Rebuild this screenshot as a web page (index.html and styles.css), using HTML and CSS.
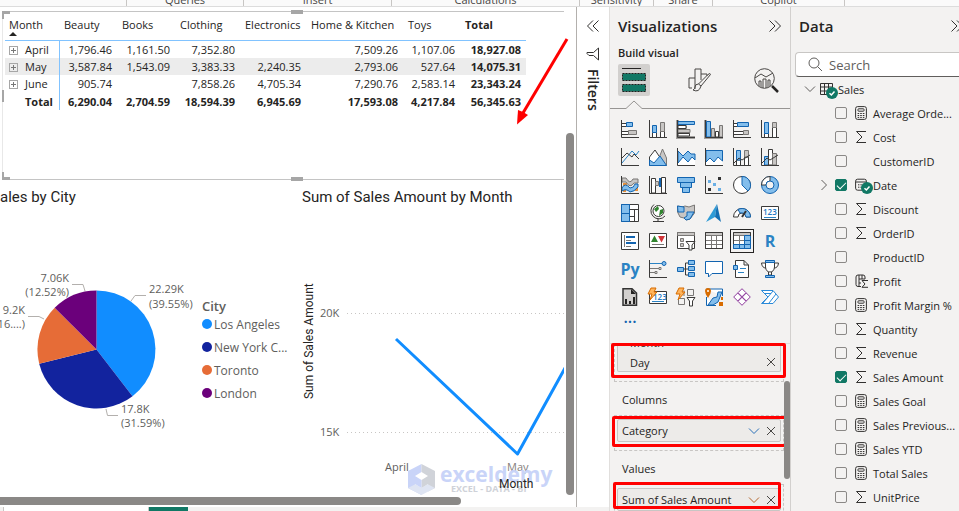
FILE: index.html
```
<!DOCTYPE html>
<html lang="en">
<head>
<meta charset="utf-8">
<title>Sales report</title>
<link rel="stylesheet" href="styles.css">
</head>
<body>
<svg class="defs" aria-hidden="true">
  <symbol id="calc" viewBox="0 0 12 14"><rect x=".6" y=".6" width="10.8" height="12.8" rx="2"/><rect x="3" y="2.8" width="6" height="2.4" rx=".6"/><path d="M2.6 7.5h1.6M5.2 7.5h1.6M7.8 7.5h1.6M2.6 9.5h1.6M5.2 9.5h1.6M7.8 9.5h1.6M2.6 11.4h1.6M5.2 11.4h1.6M7.8 11.4h1.6"/></symbol>
  <symbol id="sum" viewBox="0 0 12 14"><path d="M11 1.5H1.5L7 7L1.5 12.5H11"/></symbol>
  <symbol id="date" viewBox="0 0 12 14"><rect x=".6" y="1.2" width="10.8" height="11" rx="2"/><path d="M.6 4H11.4M3 6.8h1.4M5.4 6.8h1.4M7.8 6.8h1.4M3 9.2h1.4M5.4 9.2h1.4"/></symbol>
  <symbol id="profit" viewBox="0 0 14 14"><path d="M6 12.500H3Q1 12.500 1 10.500V3Q1 1 3 1H8Q10 1 10 3V5M4 1V12M4 5H10M4 9H6M7 1V5M13 6.500H7L10 10L7 13.300H13"/></symbol>
  <symbol id="cross" viewBox="0 0 10 10"><path d="M1 1L9 9M9 1L1 9"/></symbol>
  <symbol id="down" viewBox="0 0 12 8"><path d="M1 1.5L6 6.5L11 1.5"/></symbol>
  <symbol id="dbl" viewBox="0 0 14 14"><path d="M1.5 1.5L7 7L1.5 12.5M7 1.5L12.5 7L7 12.5"/></symbol>
  <symbol id="ok" viewBox="0 0 12 12"><circle cx="6" cy="6" r="6" fill="#117865"/><path d="M3.5 6.2L5.4 8L8.5 4.5" fill="none" stroke="#fff" stroke-width="1.5"/></symbol>
</svg>

<div class="app">
<header class="ribbon">
  <span class="r1"></span><span class="r2">Queries</span><span class="r3">Insert</span><span class="r4">Calculations</span><span class="r5">Sensitivity</span><span class="r6">Share</span><span class="r7">Copilot</span>
</header>

<div class="workspace">
<div class="left">
<div class="stage">
<main class="report">
  <div class="visuals">
    <section class="matrix">
      <i class="handle tl"></i><i class="handle tm"></i><i class="handle ml"></i><i class="handle bl"></i><i class="handle bm"></i>
      <table>
        <colgroup><col class="c-month"><col class="c-58"><col class="c-58"><col class="c-65"><col class="c-66"><col class="c-97"><col class="c-57"><col class="c-66"></colgroup>
        <thead>
          <tr><th>Month<span class="sort"></span></th><th>Beauty</th><th>Books</th><th>Clothing</th><th>Electronics</th><th>Home &amp; Kitchen</th><th>Toys</th><th class="b">Total</th></tr>
        </thead>
        <tbody>
          <tr><th><button class="plus" aria-label="Expand April"></button>April</th><td>1,796.46</td><td>1,161.50</td><td>7,352.80</td><td></td><td>7,509.26</td><td>1,107.06</td><td class="b">18,927.08</td></tr>
          <tr class="alt"><th><button class="plus" aria-label="Expand May"></button>May</th><td>3,587.84</td><td>1,543.09</td><td>3,383.33</td><td>2,240.35</td><td>2,793.06</td><td>527.64</td><td class="b">14,075.31</td></tr>
          <tr><th><button class="plus" aria-label="Expand June"></button>June</th><td>905.74</td><td></td><td>7,858.26</td><td>4,705.34</td><td>7,290.76</td><td>2,583.14</td><td class="b">23,343.24</td></tr>
          <tr class="total"><th>Total</th><td>6,290.04</td><td>2,704.59</td><td>18,594.39</td><td>6,945.69</td><td>17,593.08</td><td>4,217.84</td><td>56,345.63</td></tr>
        </tbody>
      </table>
    </section>

    <section class="pie">
      <h2>ales by City</h2>
      <div class="pie-body">
      <svg width="198" height="283" viewBox="0 212 198 283">
        <path fill="#118dff" d="M96.500 349.500V290.500A59 59 0 0 1 132.500 396.200Z"/>
        <path fill="#12239e" d="M96.500 349.500L132.500 396.200A59 59 0 0 1 39.200 363.700Z"/>
        <path fill="#e66c37" d="M96.500 349.500L39.200 363.700A59 59 0 0 1 54.700 307.800Z"/>
        <path fill="#6b007b" d="M96.500 349.500L54.700 307.800A59 59 0 0 1 96.500 290.500Z"/>
        <path class="leader" d="M131 301L135 295.500H146M72 284.500H83L85 291M28 316.500H39L44 319M106 409L107.500 415.500H118"/>
        <text x="149" y="293">22.29K</text><text x="149" y="308">(39.55%)</text>
        <text class="end" x="69" y="282">7.06K</text><text class="end" x="69" y="296">(12.52%)</text>
        <text class="end" x="25" y="314">9.2K</text><text class="end" x="25" y="328">(16....)</text>
        <text x="121" y="413">17.8K</text><text x="121" y="427">(31.59%)</text>
      </svg>
      <div class="legend">
        <h3>City</h3>
        <ul>
          <li><i class="la"></i>Los Angeles</li>
          <li><i class="ny"></i>New York C...</li>
          <li><i class="to"></i>Toronto</li>
          <li><i class="lo"></i>London</li>
        </ul>
      </div>
      </div>
    </section>

    <section class="line">
      <h2>Sum of Sales Amount by Month</h2>
      <svg width="274" height="283" viewBox="290 212 274 283">
        <path class="grid" d="M347 313.500H564M347 432.500H564"/>
        <text x="320" y="317">20K</text><text x="320" y="436">15K</text>
        <text x="385" y="471">April</text><text class="may" x="507" y="471">May</text>
        <g class="mark">
          <path fill="#c9d4f8" d="M408 471L421.500 464V474L415 478V486L421.500 490V495L408 488Z"/>
          <path fill="#d0d3d9" d="M421.500 464L435 471V488L428 491.500V478L421.500 474Z"/>
          <path fill="#dfe5f3" d="M408 488L421.500 481L435 488L421.500 495Z"/>
          <path fill="#fff" d="M415 476L421.500 472L428 476V484L421.500 488L415 484Z"/>
          <path fill="#d0d3d9" d="M421.500 480L428 476V484L421.500 488Z"/>
          <path fill="#c9d4f8" d="M415 476L421.500 480V488L415 484Z"/>
          <text class="brand" x="440" y="482">exceldemy</text>
          <text class="tag" x="451" y="492">EXCEL - DATA - BI</text>
        </g>
        <text class="axis" x="499" y="488">Month</text>
        <text class="axis" transform="translate(313 399) rotate(-90)">Sum of Sales Amount</text>
        <path class="series" d="M396 339L517.500 454L570 359"/>
      </svg>
    </section>
  </div>
  <div class="vbar"><i></i></div>
  <div class="hbar"><i></i></div>
  <svg class="arrow" width="56" height="90" viewBox="514 36 56 90"><path d="M567 39L523 113" stroke="#f00" stroke-width="3"/><path fill="#f00" d="M517 124.500L518 110L523 112L528 115Z"/></svg>
</main>

<aside class="filters">
  <button class="icon-btn flip" aria-label="Expand filters"><svg width="14" height="14"><use href="#dbl"/></svg></button>
  <svg class="funnel" width="14" height="14" viewBox="0 0 14 14"><path d="M12.500 1V13L7.500 8.500H3L1 6.500V5.500H7.500L12.500 1"/></svg>
  <h2>Filters</h2>
</aside>
</div>
<footer class="pages"><span class="page"></span><span class="page on"></span></footer>
</div>

<aside class="viz">
  <div class="pane-head"><h2>Visualizations</h2><button class="icon-btn" aria-label="Collapse"><svg width="14" height="14"><use href="#dbl"/></svg></button></div>
  <h3>Build visual</h3>
  <div class="modes">
    <button class="mode on" aria-label="Build visual"><svg width="26" height="28" viewBox="0 0 26 28"><path d="M1 2.500H20" stroke="#252423"/><path d="M1.500 7.500H24.500V14.500H1.500ZM1.500 18.500H24.500V25.500H1.500Z" fill="#117865" stroke="#201f1e" stroke-dasharray="2 1"/></svg></button>
    <button class="mode" aria-label="Format visual"><svg width="26" height="26" viewBox="0 0 26 26"><path class="ln" d="M2 21V11H8V22M8 11V2H14V13M14 7H20V9M2 21H5M23.500 7.500L14 19L11.500 17L21 7.500Q23.500 5.500 23.500 7.500M11.500 17Q8 17 8 20Q8 22 6 23Q12 26 14 19"/></svg></button>
    <button class="mode" aria-label="Analytics"><svg width="26" height="26" viewBox="0 0 26 26"><circle class="ln" cx="11.500" cy="11.500" r="9.800"/><path class="ln" d="M2 11L8 7L13 10L20 6M6 19V14H8V20M10 21V12H13V21M15 20V13H17V19"/><path d="M19 19L25 25" stroke="#252423" stroke-width="2.500"/></svg></button>
  </div>
  <svg class="notch" height="10" width="180" viewBox="0 0 180 10"><path d="M0 8.500H16L24 1L32 8.500H180"/></svg>

  <div class="gallery">
    <button aria-label="Stacked bar"><svg viewBox="0 0 18 18"><path class="w" d="M.5 3.500H5.500V6.500H.5ZM.5 11.500H7.500V14.500H.5Z"/><path class="bl" d="M5.500 2.500H11.500V6.500H5.500Z"/><path class="gr" d="M7.500 10.500H15.500V14.500H7.500Z"/><path class="k" d="M.5 0V17.500H18"/></svg></button>
    <button aria-label="Stacked column"><svg viewBox="0 0 18 18"><path class="w" d="M3.500 12.500H7.500V17.500H3.500ZM11.500 11.500H15.500V17.500H11.500Z"/><path class="bl" d="M3.500 5.500H7.500V12.500H3.500Z"/><path class="gr" d="M11.500 2.500H15.500V11.500H11.500Z"/><path class="k" d="M.5 0V17.500H18"/></svg></button>
    <button aria-label="Clustered bar"><svg viewBox="0 0 18 18"><path class="halo" d="M.5 0V17.500H18M1 3H17M1 7H10M1 14H13"/><path class="bl" d="M1 1.500H17.500V4.500H1Z"/><path class="w" d="M1 5.500H9V8.500H1ZM1 13.500H12.500V16H1Z"/><path class="gr" d="M1 9.500H13V12.500H1Z"/><path class="k" d="M.5 0V17.500H18"/></svg></button>
    <button aria-label="Clustered column"><svg viewBox="0 0 18 18"><path class="halo" d="M.5 0V17.500H18M3 1V17M8 9V17M16 6V17"/><path class="bl" d="M1.500 1.500H5.500V17H1.500Z"/><path class="gr" d="M6.500 8.500H9.500V17H6.500ZM14.500 5.500H17.500V17H14.500Z"/><path class="w" d="M10.500 11.500H13.500V17H10.500Z"/><path class="k" d="M.5 0V17.500H18"/></svg></button>
    <button aria-label="100% stacked bar"><svg viewBox="0 0 18 18"><path class="w" d="M.5 3.500H4.500V6.500H.5ZM.5 11.500H10.500V14.500H.5Z"/><path class="bl" d="M4.500 2.500H15.500V6.500H4.500Z"/><path class="gr" d="M10.500 10.500H15.500V14.500H10.500Z"/><path class="k" d="M.5 0V17.500H18"/></svg></button>
    <button aria-label="100% stacked column"><svg viewBox="0 0 18 18"><path class="w" d="M3.500 13.500H7.500V17.500H3.500ZM11.500 7.500H15.500V17.500H11.500Z"/><path class="bl" d="M3.500 2.500H7.500V13.500H3.500Z"/><path class="gr" d="M11.500 2.500H15.500V7.500H11.500Z"/><path class="k" d="M.5 0V17.500H18"/></svg></button>

    <button aria-label="Line"><svg viewBox="0 0 18 18"><path class="sb" d="M1 15L11 3L15 7L18 3"/><path class="k" d="M.5 0V17.500H18M1 10L6 5L11 9L13 6L18 11"/></svg></button>
    <button aria-label="Area"><svg viewBox="0 0 18 18"><path class="gr" d="M7 17.500L13.500 1L17.500 10V17.500Z"/><path class="w" d="M.5 17.500V9L6 2L14 14V17.500Z"/><path class="bl" d="M.5 17.500V12L5 15L11 8L17.500 17.500Z"/></svg></button>
    <button aria-label="Stacked area"><svg viewBox="0 0 18 18"><path fill="#fff" d="M1 15L6 9L11 14L15 9L18 12V17H1Z"/><path class="bl" d="M1 3L6 8L11 3L14 6H18V12L15 9L11 14L6 9L1 15Z"/><path class="k" d="M.5 0V17.500H18"/></svg></button>
    <button aria-label="100% stacked area"><svg viewBox="0 0 18 18"><path fill="#fff" d="M1 14L5 10L9 14L13 9L17.500 13V17H1Z"/><path class="bl" d="M1 2.500H17.500V13L13 9L9 14L5 10L1 14Z"/><path class="k" d="M.5 0V17.500H18"/></svg></button>
    <button aria-label="Line and stacked column"><svg viewBox="0 0 18 18"><path class="w" d="M3.500 12H7.500V17.500H3.500ZM11.500 9H15.500V17.500H11.500Z"/><path class="bl" d="M3.500 2.500H7.500V12H3.500Z"/><path class="gr" d="M11.500 2.500H15.500V9H11.500Z"/><path class="k" d="M.5 0V17.500H18M1 15L6 10L9 12L17 7"/></svg></button>
    <button aria-label="Line and clustered column"><svg viewBox="0 0 18 18"><path class="bl" d="M3.500 8.500H7.500V17H3.500Z"/><path class="w" d="M7.500 1.500H11.500V17H7.500Z"/><path class="gr" d="M11.500 5.500H15.500V17H11.500Z"/><path class="k" d="M.5 0V17.500H18M1 15L6 10L9 12L17 7"/></svg></button>

    <button aria-label="Ribbon"><svg viewBox="0 0 18 18"><path fill="#e8913a" d="M2 7H6V11H2ZM2 13H5V16H2ZM14 10H17V15H14Z"/><path class="gr" d="M1 2H5Q9 9 12 3H17V7H13Q9 13 5 6H1Z"/><path class="bl" d="M1 12Q4 6 9 12Q13 12 14 8H17V11Q13 16 9 16Q5 12 1 15Z"/><path class="k" d="M.5 0V17.500H18"/></svg></button>
    <button aria-label="Waterfall"><svg viewBox="0 0 18 18"><path class="w" d="M2.500 2.500H6.500V17H2.500ZM12.500 1.500H16.500V17H12.500Z"/><path class="gr" d="M6.500 5.500H9.500V9.500H6.500Z"/><path fill="#1264b0" d="M10 2H12V11H10Z"/><path class="k" d="M.5 0V17.500H18"/></svg></button>
    <button aria-label="Funnel"><svg viewBox="0 0 18 18"><path class="bl" d="M.5 1.500H17.500V6.500H.5ZM3.500 6.500H14.500V11.500H3.500ZM5.500 11.500H12.500V16.500H5.500Z"/></svg></button>
    <button aria-label="Scatter"><svg viewBox="0 0 18 18"><path class="k" d="M.5 0V17.500H18"/><path fill="#333" d="M13 1H16V4H13ZM3 12H6V15H3Z"/><path fill="#69afe5" d="M3 4H6V7H3ZM8 7H11V10H8ZM13 12H16V15H13Z"/></svg></button>
    <button aria-label="Pie"><svg viewBox="0 0 18 18"><circle class="w" cx="9" cy="9" r="8.500"/><path class="bl" d="M9 9V.5A8.500 8.500 0 0 1 15 15Z"/></svg></button>
    <button aria-label="Donut"><svg viewBox="0 0 18 18"><circle class="bl" cx="9" cy="9" r="8.500"/><path class="w" d="M9 .5A8.500 8.500 0 0 0 .5 9H5Q5 5 9 5Z"/><circle cx="9" cy="9" r="4" fill="#f3f2f1" stroke="#1264b0"/></svg></button>

    <button aria-label="Treemap"><svg viewBox="0 0 18 18"><path class="w" d="M.5 .5H17.500V17.500H.5Z"/><path class="bl" d="M.5 .5H8.500V17.500H.5ZM.5 9.500H8.500"/><path class="k" d="M8.500 5.500H17.500M13.500 5.500V17.500M8.500 12.500H13.500"/></svg></button>
    <button aria-label="Map"><svg viewBox="0 0 18 18"><circle class="w" cx="9.500" cy="7" r="5.500"/><path fill="#31852f" d="M5 5L9 2L10 5L7 8ZM11 6L14 5V9L10 12Z"/><path class="k" d="M5 .5A8 8 0 1 0 16 12M9 15V17.500M4 17.500H15"/></svg></button>
    <button aria-label="Filled map"><svg viewBox="0 0 18 18"><path class="gr" d="M.5 2L5 3L8 2L12 3L17.500 1V9L13 15L9 16L7 14L3 13L.5 8Z"/><path class="bl" d="M.5 2L7 3V8H1ZM10 8L17 8L13 15L9 16L7 14L10 12Z"/></svg></button>
    <button aria-label="Azure map"><svg viewBox="0 0 18 18"><path fill="#2e9bd6" d="M12 0L1 18L10 13Z"/><path fill="#136fb3" d="M12 0L16 18L10 13Z"/></svg></button>
    <button aria-label="Gauge"><svg viewBox="0 0 18 18"><path class="w" d="M.5 13A8.500 8.500 0 0 1 17.500 13H13A4 4 0 0 0 5 13Z"/><path class="bl" d="M5 5.500A8.500 8.500 0 0 1 17.500 13H13Q12 8 7 9Z"/><path d="M9 13L13 7" stroke="#333" stroke-width="2"/></svg></button>
    <button aria-label="Card"><svg viewBox="0 0 18 18"><path class="w" d="M.5 2.500H17.500V15.500H.5Z"/><text x="2" y="11" class="num">123</text><path class="sb" d="M3 13.500H15"/></svg></button>

    <button aria-label="Multi-row card"><svg viewBox="0 0 18 18"><path class="w" d="M.5 .5H17.500V17.500H.5Z"/><path stroke="#1264b0" stroke-width="2" d="M5 5H14M5 11H15"/><path class="g" d="M3.500 3V15M5 8.500H10M5 14.500H10"/></svg></button>
    <button aria-label="KPI"><svg viewBox="0 0 18 18"><path class="w" d="M.5 1.500H17.500V15.500H.5Z"/><path fill="#31852f" d="M2 10L5.500 3.500L9 10Z"/><path fill="#d13438" d="M9 4H16L12.500 10.500Z"/><path class="g" d="M3 12.500H15"/></svg></button>
    <button aria-label="Slicer"><svg viewBox="0 0 18 18"><path class="w" d="M.5 .5H17.500V16.500H.5Z"/><path class="gr" d="M.5 .5H17.500V3.500H.5ZM3.500 6.500H6.500V9.500H3.500ZM3.500 11.500H6.500V14.500H3.500Z"/><path class="w" d="M9 9.500H18L15 13V18H12V13Z"/></svg></button>
    <button aria-label="Table"><svg viewBox="0 0 18 18"><path class="w" d="M.5 .5H17.500V16.500H.5Z"/><path class="gr" d="M.5 .5H17.500V3.500H.5Z"/><path class="g" d="M6.500 4V16M11.500 4V16M1 8.500H17M1 12.500H17"/><path class="k" d="M.5 .5H17.500V16.500H.5Z"/></svg></button>
    <button class="on" aria-label="Matrix"><svg viewBox="0 0 18 18"><path class="w" d="M.5 .5H17.500V16.500H.5Z"/><path class="gr" d="M.5 .5H17.500V3.500H.5Z"/><path class="g" d="M6.500 4V16M1 8.500H17"/><path class="bl" d="M11.500 3.500H17.500V16.500H.5V12.500H11.500ZM11.500 8.500H17.500M11.500 12.500H17.500M6.500 12.500V16.500M11.500 12.500V16.500"/><path class="k" d="M.5 12V.5H17.500V4"/></svg></button>
    <button aria-label="R visual" class="txt">R</button>

    <button aria-label="Python visual" class="txt">Py</button>
    <button aria-label="Key influencers"><svg viewBox="0 0 18 18"><path class="k" d="M.5 0V17.500H18"/><path class="sb" d="M1 3.500H14"/><circle class="bl" cx="15" cy="3.500" r="2"/><path class="g" d="M1 8.500H10M1 12.500H6M10 7.500H12V9.500H10ZM6 11.500H8V13.500H6Z"/></svg></button>
    <button aria-label="Decomposition tree"><svg viewBox="0 0 18 18"><path class="k" d="M6 9H11M8.500 3H11M8.500 3V15H11"/><path class="bl" d="M.5 7.500H6.500V11.500H.5ZM11.500 .5H17.500V4.500H11.500ZM11.500 6.500H17.500V10.500H11.500ZM11.500 12.500H17.500V16.500H11.500Z"/></svg></button>
    <button aria-label="Q&amp;A"><svg viewBox="0 0 18 18"><path d="M.5 1.500H17.500V13.500H7L3.500 17V13.500H.5Z" fill="#fff" stroke="#1264b0"/></svg></button>
    <button aria-label="Narrative"><svg viewBox="0 0 18 18"><path class="w" d="M2.500 .5H11L15.500 5V17.500H2.500ZM11 .5V5H15.500"/><path class="bl" d="M.5 5.500H4.500V9.500H.5Z"/><path class="sb" d="M7 8.500H13M5 12.500H11"/></svg></button>
    <button aria-label="Goals"><svg viewBox="0 0 18 18"><path class="w" d="M4.500 1H13.500V7Q13 12 9 12Q5 12 4.500 7ZM4 3H.5Q1 8 5 8M14 3H17.500Q17 8 13 8M7.500 12V15H10.500V12"/><path class="bl" d="M4.500 .5H13.500V2.500H4.500ZM4.500 15.500H13.500V17.500H4.500Z"/></svg></button>

    <button aria-label="Paginated report"><svg viewBox="0 0 18 18"><path d="M2 .8H11L15.500 5V17.200H2Z" fill="#d2d0ce" stroke="#333" stroke-width="1.500"/><path fill="#252423" d="M4 11H6V16H4ZM8 13H10V16H8ZM12 9H14V16H12ZM10 1V6H15Z"/></svg></button>
    <button aria-label="Card (new)"><svg viewBox="0 0 18 18"><path class="w" d="M.5 3.500H17.500V15.500H.5Z"/><text x="4" y="12" class="num">123</text><path class="sb" d="M3 13.500H15"/><path fill="#ffb45c" stroke="#d86c00" d="M2 0H7L5 4H8L1 12L3 6H-1Z"/></svg></button>
    <button aria-label="Slicer (new)"><svg viewBox="0 0 18 18"><path class="g" d="M10.500 1.500H16.500V7.500H10.500ZM1.500 10.500H7.500V16.500H1.500ZM7 2.500V8"/><path class="w" d="M10 9.500H18L15.500 13V18H12.500V13Z"/><path fill="#ffb45c" stroke="#d86c00" d="M2 0H7L5 4H8L1 12L3 6H-1Z"/></svg></button>
    <button aria-label="ArcGIS"><svg viewBox="0 0 18 18"><path fill="#fff" stroke="#1264b0" d="M1.500 1H17.500V8M1.500 9V17.500H11"/><path class="bl" d="M3 17L8 10L12 9L13 4L17 4L13 14L8 17Z"/><path fill="#d86c00" d="M0 3Q0 0 3 0Q6 0 6 3Q6 6 3 10Q0 6 0 3ZM14 14H18V18H14ZM16 9H18V12H16Z"/><circle cx="3" cy="3" r="1" fill="#fff"/></svg></button>
    <button aria-label="Power Apps"><svg viewBox="0 0 18 18"><path fill="#fff" stroke="#8e3a9d" d="M9 .7L13 4.700L9 8.700L5 4.700ZM9 9.300L13 13.300L9 17.300L5 13.300ZM4.700 5L8.700 9L4.700 13L.7 9ZM13.300 5L17.300 9L13.300 13L9.300 9Z"/></svg></button>
    <button aria-label="Power Automate"><svg viewBox="0 0 18 18"><path fill="#fff" stroke="#2a8ad8" d="M.5 2.500H12L17.500 9L12 15.500H.5L7 9ZM4 5.500L10 5.500M2 15L12 3M8 15L15 6"/></svg></button>
    <button aria-label="More visuals" class="more">...</button>
  </div>

  <div class="wells">
    <div class="well-list">
      <div class="well first">
        <div class="pill rows"><span>Month<button aria-label="Remove Month"><svg width="10" height="10"><use href="#cross"/></svg></button></span><span>Day<button aria-label="Remove Day"><svg width="10" height="10"><use href="#cross"/></svg></button></span></div>
        <i class="ring ring-rows"></i>
      </div>
      <h4>Columns</h4>
      <div class="well">
        <div class="pill">Category<button class="dd" aria-label="Category options"><svg width="12" height="8"><use href="#down"/></svg></button><button aria-label="Remove Category"><svg width="10" height="10"><use href="#cross"/></svg></button></div>
        <i class="ring ring-cols"></i>
      </div>
      <h4>Values</h4>
      <div class="well">
        <div class="pill">Sum of Sales Amount<button class="dd warm" aria-label="Values options"><svg width="12" height="8"><use href="#down"/></svg></button><button aria-label="Remove Sum of Sales Amount"><svg width="10" height="10"><use href="#cross"/></svg></button></div>
        <i class="ring ring-vals"></i>
      </div>
    </div>
    <i class="thumb"></i>
  </div>
</aside>

<aside class="data">
  <div class="pane-head"><h2>Data</h2><button class="icon-btn" aria-label="Collapse"><svg width="14" height="14"><use href="#dbl"/></svg></button></div>
  <label class="search"><svg width="15" height="15" viewBox="0 0 15 15"><circle cx="6" cy="6" r="5"/><path d="M9.500 9.500L14 14"/></svg><input type="text" placeholder="Search" aria-label="Search"></label>
  <div class="table-row"><svg class="chev" width="12" height="8"><use href="#down"/></svg><span class="ic"><svg width="13" height="12" viewBox="0 0 13 12"><path d="M.5 .5H12.500V11.500H.5ZM.5 4H12.500M.5 8H12.500M4.500 .5V11.500M8.500 .5V11.500"/></svg><svg class="badge" width="12" height="12"><use href="#ok"/></svg></span>Sales</div>
  <ul class="fields">
    <li><label><input type="checkbox"><span class="ic"><svg width="12" height="14"><use href="#calc"/></svg></span>Average Orde...</label></li>
    <li><label><input type="checkbox"><span class="ic"><svg width="12" height="14"><use href="#sum"/></svg></span>Cost</label></li>
    <li><label><input type="checkbox"><span class="ic"></span>CustomerID</label></li>
    <li><svg class="chev right" width="12" height="8"><use href="#down"/></svg><label><input type="checkbox" checked><span class="ic"><svg width="12" height="14"><use href="#date"/></svg><svg class="badge" width="12" height="12"><use href="#ok"/></svg></span>Date</label></li>
    <li><label><input type="checkbox"><span class="ic"><svg width="12" height="14"><use href="#sum"/></svg></span>Discount</label></li>
    <li><label><input type="checkbox"><span class="ic"><svg width="12" height="14"><use href="#sum"/></svg></span>OrderID</label></li>
    <li><label><input type="checkbox"><span class="ic"></span>ProductID</label></li>
    <li><label><input type="checkbox"><span class="ic"><svg width="14" height="14"><use href="#profit"/></svg></span>Profit</label></li>
    <li><label><input type="checkbox"><span class="ic"><svg width="12" height="14"><use href="#calc"/></svg></span>Profit Margin %</label></li>
    <li><label><input type="checkbox"><span class="ic"><svg width="12" height="14"><use href="#sum"/></svg></span>Quantity</label></li>
    <li><label><input type="checkbox"><span class="ic"><svg width="12" height="14"><use href="#sum"/></svg></span>Revenue</label></li>
    <li><label><input type="checkbox" checked><span class="ic"><svg width="12" height="14"><use href="#sum"/></svg></span>Sales Amount</label></li>
    <li><label><input type="checkbox"><span class="ic"><svg width="12" height="14"><use href="#calc"/></svg></span>Sales Goal</label></li>
    <li><label><input type="checkbox"><span class="ic"><svg width="12" height="14"><use href="#calc"/></svg></span>Sales Previous...</label></li>
    <li><label><input type="checkbox"><span class="ic"><svg width="12" height="14"><use href="#calc"/></svg></span>Sales YTD</label></li>
    <li><label><input type="checkbox"><span class="ic"><svg width="12" height="14"><use href="#calc"/></svg></span>Total Sales</label></li>
    <li><label><input type="checkbox"><span class="ic"><svg width="12" height="14"><use href="#sum"/></svg></span>UnitPrice</label></li>
  </ul>
</aside>
</div>
</div>
</body>
</html>
```
FILE: styles.css
```
* { box-sizing: border-box; }
body {
  margin: 0;
  font-family: "Open Sans", "Noto Sans", sans-serif;
  font-size: 11px;
  color: #252423;
  background: #f3f2f1;
}
h2, h3, h4, ul { margin: 0; padding: 0; list-style: none; }
svg { display: block; fill: none; flex: none; }
button {
  border: 0;
  padding: 0;
  background: none;
  font: inherit;
  color: inherit;
}
.defs { position: absolute; width: 0; height: 0; }
.app {
  display: flex;
  flex-direction: column;
  height: 100vh;
  overflow: hidden;
}

/* ribbon */
.ribbon {
  display: flex;
  align-items: flex-end;
  height: 7px;
  flex: none;
  overflow: hidden;
  background: #fafafa;
  border-bottom: 1px solid #dcdcdc;
  color: #484644;
  font-size: 11px;
  line-height: 12px;
  text-align: center;
}
.ribbon span { border-right: 1px solid #c8c6c4; height: 12px; }
.r1 { width: 127px; }
.r2 { width: 117px; }
.r3 { width: 148px; }
.r4 { width: 188px; }
.r5 { width: 74px; }
.r6 { width: 59px; }
.r7 { width: 132px; }

.workspace { display: flex; flex: 1; min-height: 0; }
.left { flex: 1; min-width: 0; display: flex; flex-direction: column; }
.stage { flex: 1; min-height: 0; display: flex; background: #fff; }

/* report canvas */
.report {
  position: relative;
  flex: 1;
  min-width: 0;
  display: grid;
  grid-template-columns: minmax(0, 1fr) 12px;
  grid-template-rows: minmax(0, 1fr) 12px;
}
.visuals {
  display: grid;
  grid-template-columns: 290px minmax(0, 1fr);
  grid-template-rows: 169px minmax(0, 1fr);
  padding-top: 4px;
  overflow: hidden;
}
.matrix {
  position: relative;
  grid-column: 1 / 3;
  margin-left: 2px;
  padding: 3px 2px;
  border: 1px solid #c4c4c4;
  border-right: 0;
  border-left-color: #e8e8e8;
}
.handle { position: absolute; background: #a6a6a6; }
.tl { left: -1px; top: -1px; width: 8px; height: 3px; }
.bl.handle { left: -1px; bottom: -1px; width: 8px; height: 3px; }
.tl::after, .bl.handle::after {
  content: "";
  position: absolute;
  left: 0;
  bottom: 0;
  width: 2px;
  height: 8px;
  background: #a6a6a6;
}
.tl::after { top: 0; bottom: auto; }
.tm { left: 288px; top: -2px; width: 12px; height: 4px; }
.bm { left: 288px; bottom: -2px; width: 12px; height: 4px; }
.ml { left: -1px; top: 78px; width: 2px; height: 12px; }

table { border-collapse: collapse; table-layout: fixed; width: 521px; line-height: 15px; }
.c-month { width: 54px; }
.c-57 { width: 57px; }
.c-58 { width: 58px; }
.c-65 { width: 65px; }
.c-66 { width: 66px; }
.c-97 { width: 97px; }
td, th { padding: 1px 5px; text-align: right; font-weight: 400; white-space: nowrap; height: 17px; }
thead th {
  height: 25px;
  padding: 2px 5px 0;
  vertical-align: top;
  text-align: left;
  border-bottom: 1px solid #81c3ff;
}
thead th:first-child { padding-left: 4px; }
tbody th {
  text-align: left;
  border-right: 1px solid #81c3ff;
  padding: 1px 0 1px 4px;
}
.sort {
  display: block;
  width: 0;
  border: 4px solid transparent;
  border-top: 0;
  border-bottom-color: #252423;
}
.alt { background: #ececec; }
.b, .total td, .total th { font-weight: 700; }
.total td, .total th { padding-top: 2px; }
.total th { padding-left: 20px; }
.plus {
  display: inline-block;
  width: 9px;
  height: 9px;
  margin-right: 7px;
  border: 1px solid #a6a6a6;
  background: linear-gradient(#777, #777) center / 5px 1px no-repeat, linear-gradient(#777, #777) center / 1px 5px no-repeat;
}

.pie h2, .line h2 {
  height: 32px;
  font: 400 15px/34px Roboto, sans-serif;
  white-space: nowrap;
}
.line h2 { padding-left: 12px; }
.pie-body { display: flex; color: #605e5c; }
.pie text, .line text { fill: #605e5c; font-size: 11px; }
.pie .end { text-anchor: end; }
.leader { stroke: #b3b0ad; }
.legend { padding: 85px 0 0 4px; font-size: 12px; white-space: nowrap; }
.legend h3 { font-size: 13px; line-height: 18px; font-weight: 600; }
.legend li { display: flex; align-items: center; gap: 2px; height: 18px; margin-bottom: 5px; }
.legend i { width: 10px; height: 10px; border-radius: 50%; }
.la { background: #118dff; }
.ny { background: #12239e; }
.to { background: #e66c37; }
.lo { background: #6b007b; }

.grid { stroke: #c8c6c4; stroke-dasharray: 1 3; }
.series { stroke: #118dff; stroke-width: 3; stroke-linejoin: round; }
.line .axis { fill: #252423; font: 12px Roboto, sans-serif; }
.line .may { fill: #85807c; }
.line .brand { fill: #c9d4f8; font: 700 21px "Open Sans", sans-serif; }
.line .tag { fill: #cfd2d8; font: 700 9px "Open Sans", sans-serif; }

.vbar { padding: 126px 0 0 2px; }
.vbar i { display: block; width: 8px; height: 100%; border-radius: 4px; background: #8a8886; }
.hbar { padding-top: 2px; grid-column: 1 / 3; }
.hbar i { display: block; width: 80%; height: 8px; border-radius: 0 4px 4px 0; background: #8a8886; }
.arrow { position: absolute; left: 514px; top: 29px; }

.filters {
  width: 33px;
  display: flex;
  flex-direction: column;
  align-items: center;
  padding-top: 12px;
  border-left: 1px solid #b3b0ad;
}
.icon-btn svg, .funnel { stroke: #323130; }
.flip { transform: rotate(180deg); }
.funnel { margin: 14px 0 8px; }
.filters h2 { writing-mode: vertical-rl; font-size: 14px; line-height: 18px; font-weight: 600; }

.pages { display: flex; height: 4px; flex: none; }
.page { width: 145px; margin-left: 3px; background: #fff; border-left: 1px solid #c8c6c4; }
.page.on { width: 40px; margin: 0; background: #117865; }

/* visualizations */
.viz {
  width: 182px;
  flex: none;
  display: flex;
  flex-direction: column;
  border-left: 1px solid #e1dfdd;
  border-right: 1px solid #d2d0ce;
}
.pane-head {
  display: flex;
  justify-content: space-between;
  align-items: center;
  height: 38px;
  padding: 0 8px;
}
.pane-head h2 { font-size: 15px; font-weight: 600; }
.viz h3 { padding-left: 8px; font-size: 11px; line-height: 16px; font-weight: 600; }
.modes { display: flex; justify-content: space-between; padding: 3px 8px 0; }
.mode { width: 32px; height: 32px; display: grid; place-items: center; border-radius: 2px; }
.mode.on { background: #d2d0ce; }
.ln { stroke: #484644; }
.notch { margin-top: 4px; width: 100%; stroke: #979593; }
.gallery {
  display: grid;
  grid-template-columns: repeat(6, 28px);
  grid-auto-rows: 28px;
  padding: 5px 0 0 6px;
}
.gallery button { width: 28px; height: 28px; display: grid; place-items: center; }
.gallery button.on { width: 24px; height: 24px; margin: 2px; border: 1px solid #252423; }
.gallery svg { width: 18px; height: 18px; overflow: visible; }
.gallery .txt { color: #2a83c4; font-size: 16px; font-weight: 700; line-height: 18px; }
.gallery .more { color: #1264b0; font-size: 16px; font-weight: 600; line-height: 12px; place-items: start center; }
.k { stroke: #3b3a39; }
.w { stroke: #3b3a39; fill: #fff; }
.gallery .bl { stroke: #1264b0; fill: #83beec; }
.gr { stroke: #797775; fill: #c8c6c4; }
.g { stroke: #797775; }
.sb { stroke: #2a83c4; }
.halo { stroke: #a19f9d; stroke-width: 3; }
.num { fill: #1e78c2; font-size: 8px; font-weight: 600; }

.wells {
  position: relative;
  flex: 1;
  min-height: 0;
  margin-top: 4px;
  border-top: 1px solid #e1dfdd;
}
.well-list { height: 100%; }
.well {
  position: relative;
  margin: 0 6px 0 4px;
  padding: 3px 2px 8px;
  border: 1px dashed #c8c6c4;
}
.well.first { border-top: 0; padding-top: 0; height: 38px; }
.pill {
  display: flex;
  align-items: center;
  height: 23px;
  padding: 0 4px;
  gap: 6px;
  background: #edebe9;
  border: 1px solid #c8c6c4;
  border-radius: 2px;
  white-space: nowrap;
}
.pill button { margin-left: auto; stroke: #484644; }
.pill .dd { stroke: #2a70b8; }
.pill .warm { stroke: #b4662e; }
.pill .dd + button { margin-left: 0; }
.rows { display: block; height: 28px; padding-left: 12px; border-top: 0; overflow: hidden; }
.rows span { display: flex; align-items: center; height: 20px; }
.rows span:first-child { margin-top: -12px; }
.viz h4 { padding: 2px 0 0 12px; font-size: 11px; font-weight: 400; line-height: 31px; }
.ring { position: absolute; border: 3px solid #f00; border-radius: 2px; }
.ring-rows { inset: -1px -3px 3px -4px; }
.ring-cols { inset: 0 -4px 3px -3px; }
.ring-vals { inset: -3px 2px 10px -2px; }
.thumb {
  position: absolute;
  right: 0;
  top: 37px;
  width: 6px;
  height: 98px;
  border-radius: 3px;
  background: #8a8886;
}

/* data */
.data { width: 168px; flex: none; white-space: nowrap; overflow: hidden; }
.data .pane-head { padding-right: 0; }
.data .pane-head .icon-btn { margin-right: -5px; }
.search {
  display: flex;
  align-items: center;
  gap: 6px;
  height: 25px;
  margin: 7px 0 0 4px;
  padding-left: 12px;
  background: #fff;
  border: 1px solid #c8c6c4;
  border-right: 0;
  border-bottom-color: #605e5c;
  border-radius: 4px 0 0 4px;
}
.search svg { stroke: #605e5c; }
.search input { flex: 1; min-width: 0; border: 0; outline: 0; padding: 0; font: 13px "Open Sans", sans-serif; }
.search input::placeholder { color: #605e5c; }
.table-row { display: flex; align-items: center; height: 24px; padding-left: 13px; }
.chev { stroke: #605e5c; }
.table-row .ic { margin: 0 6px 0 4px; }
.ic { position: relative; display: flex; width: 12px; stroke: #323130; }
.badge { position: absolute; left: 6px; top: 4px; stroke: none; }
.fields li { position: relative; display: flex; align-items: center; height: 24px; padding-left: 44px; }
.fields label { display: flex; align-items: center; }
.fields .ic { margin: 0 6px 0 8px; }
.chev.right { margin-left: -17px; margin-right: 5px; transform: rotate(-90deg); }
.fields input {
  appearance: none;
  display: grid;
  place-items: center;
  width: 12px;
  height: 12px;
  margin: 0;
  border: 1px solid #8a8886;
  border-radius: 2px;
}
.fields input:checked { background: #117865; border-color: #117865; }
.fields input:checked::before {
  content: "";
  width: 8px;
  height: 4px;
  margin-bottom: 2px;
  border: solid #fff;
  border-width: 0 0 1px 1px;
  transform: rotate(-45deg);
}
```
